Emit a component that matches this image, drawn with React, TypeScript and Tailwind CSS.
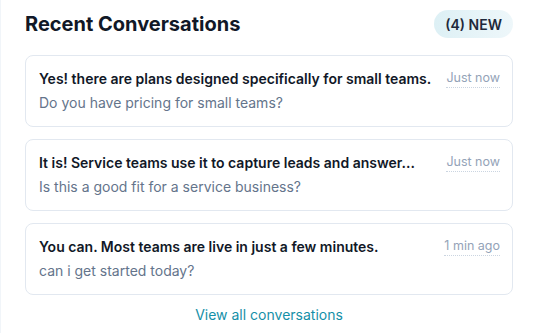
import React from 'react';

const conversations = [
  {
    reply: 'Yes! there are plans designed specifically for small teams.',
    question: 'Do you have pricing for small teams?',
    time: 'Just now',
  },
  {
    reply: 'It is! Service teams use it to capture leads and answer...',
    question: 'Is this a good fit for a service business?',
    time: 'Just now',
  },
  {
    reply: 'You can. Most teams are live in just a few minutes.',
    question: 'can i get started today?',
    time: '1 min ago',
  },
];

export default function App() {
  return (
    <div
      className="w-[537px] h-[333px] bg-white border-l border-slate-100 overflow-hidden"
      style={{ fontFamily: 'Inter, "Noto Sans", sans-serif' }}
    >
      <div className="px-[24px] pt-[10px]">
        {/* Header */}
        <div className="flex items-center justify-between h-[28px]">
          <h2 className="text-[20px] font-bold text-[#111827]">Recent Conversations</h2>
          <span className="h-[28px] px-[11px] flex items-center rounded-full bg-gradient-to-r from-[#ddf0f5] to-[#eef7fa] text-[14px] font-semibold text-[#1e293b]">
            (4) NEW
          </span>
        </div>

        {/* List */}
        <div className="mt-[17px] flex flex-col gap-[12px]">
          {conversations.map((c) => (
            <div
              key={c.question}
              className="h-[72px] rounded-lg border border-[#e2e8f0] bg-white pl-[13px] pr-[12px] pt-[13px]"
            >
              <div className="flex items-start justify-between gap-3">
                <p className="min-w-0 truncate text-[14px] font-semibold text-[#111827] leading-[20px]">
                  {c.reply}
                </p>
                <span className="shrink-0 text-[12.5px] text-[#94a3b8] leading-[18px] border-b border-dotted border-[#cbd5e1]">
                  {c.time}
                </span>
              </div>
              <p className="mt-[4px] text-[14px] text-[#64748b] leading-[20px]">{c.question}</p>
            </div>
          ))}
        </div>

        {/* Footer link */}
        <div className="mt-[10px] flex justify-center">
          <a className="text-[14px] text-[#1590a8] leading-[20px] cursor-pointer">
            View all conversations
          </a>
        </div>
      </div>
    </div>
  );
}
